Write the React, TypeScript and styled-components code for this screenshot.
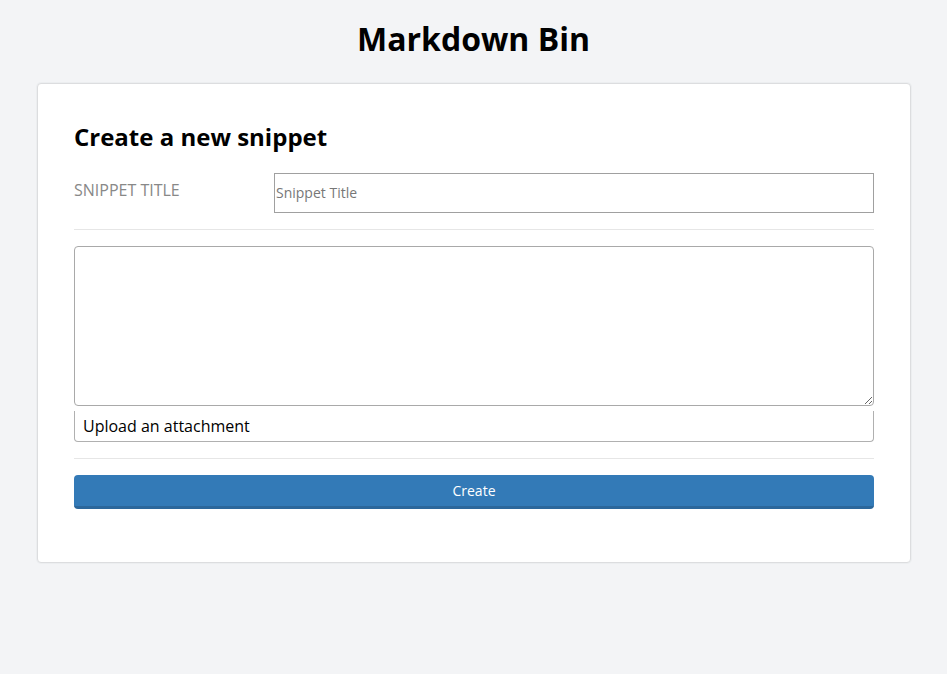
import React from "react";
import styled, { createGlobalStyle } from "styled-components";

const GlobalStyle = createGlobalStyle`
  html, body {
    margin: 0;
    padding: 0;
    background: #f3f4f6;
    font-family: "Open Sans", "Noto Sans", sans-serif;
    color: #000;
  }
  * { box-sizing: border-box; }
`;

const Page = styled.div`
  min-height: 674px;
  padding: 16px 0 40px;
`;

const SiteTitle = styled.h1`
  margin: 0 0 21px;
  text-align: center;
  font-size: 32px;
  font-weight: 700;
  line-height: 46px;
`;

const Card = styled.div`
  margin: 0 36px 0 37px;
  background: #fff;
  border: 1px solid #dcdddf;
  box-shadow: 0 0 0 1px #eceef0;
  border-radius: 4px;
  padding: 36px 36px 53px;
`;

const Heading = styled.h2`
  margin: 0 0 19px;
  font-size: 24px;
  font-weight: 700;
  line-height: 34px;
`;

const FieldRow = styled.div`
  display: grid;
  grid-template-columns: 200px 1fr;
  align-items: start;
`;

const Label = styled.label`
  font-size: 16px;
  color: #888;
  line-height: 20px;
  padding-top: 7px;
`;

const TitleInput = styled.input`
  height: 40px;
  width: 100%;
  border: 1px solid #a0a0a0;
  border-radius: 0;
  padding: 0 1px 2px;
  font-family: inherit;
  font-size: 14px;
  color: #333;
  outline: none;
  &::placeholder { color: #777; }
`;

const Divider = styled.hr`
  border: 0;
  border-top: 1px solid #e6e6e6;
  margin: 16px 0;
`;

const Body = styled.textarea`
  display: block;
  width: 100%;
  height: 160px;
  border: 1px solid #a9a9a9;
  border-radius: 4px;
  resize: vertical;
  font-family: inherit;
  font-size: 14px;
  padding: 4px 8px;
  outline: none;
`;

const Upload = styled.div`
  margin-top: 5px;
  height: 31px;
  border: 1px solid #b0b0b0;
  border-top: 0;
  border-radius: 0 0 4px 4px;
  padding: 4px 8px 0;
  font-size: 16px;
  line-height: 22px;
`;

const CreateButton = styled.button`
  display: block;
  width: 100%;
  height: 34px;
  background: #337ab7;
  border: 0;
  border-bottom: 3px solid #2c679b;
  border-radius: 4px;
  color: #fff;
  font-family: inherit;
  font-size: 14px;
  padding: 0;
`;

export default function App() {
  return (
    <Page>
      <GlobalStyle />
      <SiteTitle>Markdown Bin</SiteTitle>
      <Card>
        <Heading>Create a new snippet</Heading>
        <FieldRow>
          <Label htmlFor="title">SNIPPET TITLE</Label>
          <TitleInput id="title" placeholder="Snippet Title" />
        </FieldRow>
        <Divider />
        <Body />
        <Upload>Upload an attachment</Upload>
        <Divider />
        <CreateButton>Create</CreateButton>
      </Card>
    </Page>
  );
}
